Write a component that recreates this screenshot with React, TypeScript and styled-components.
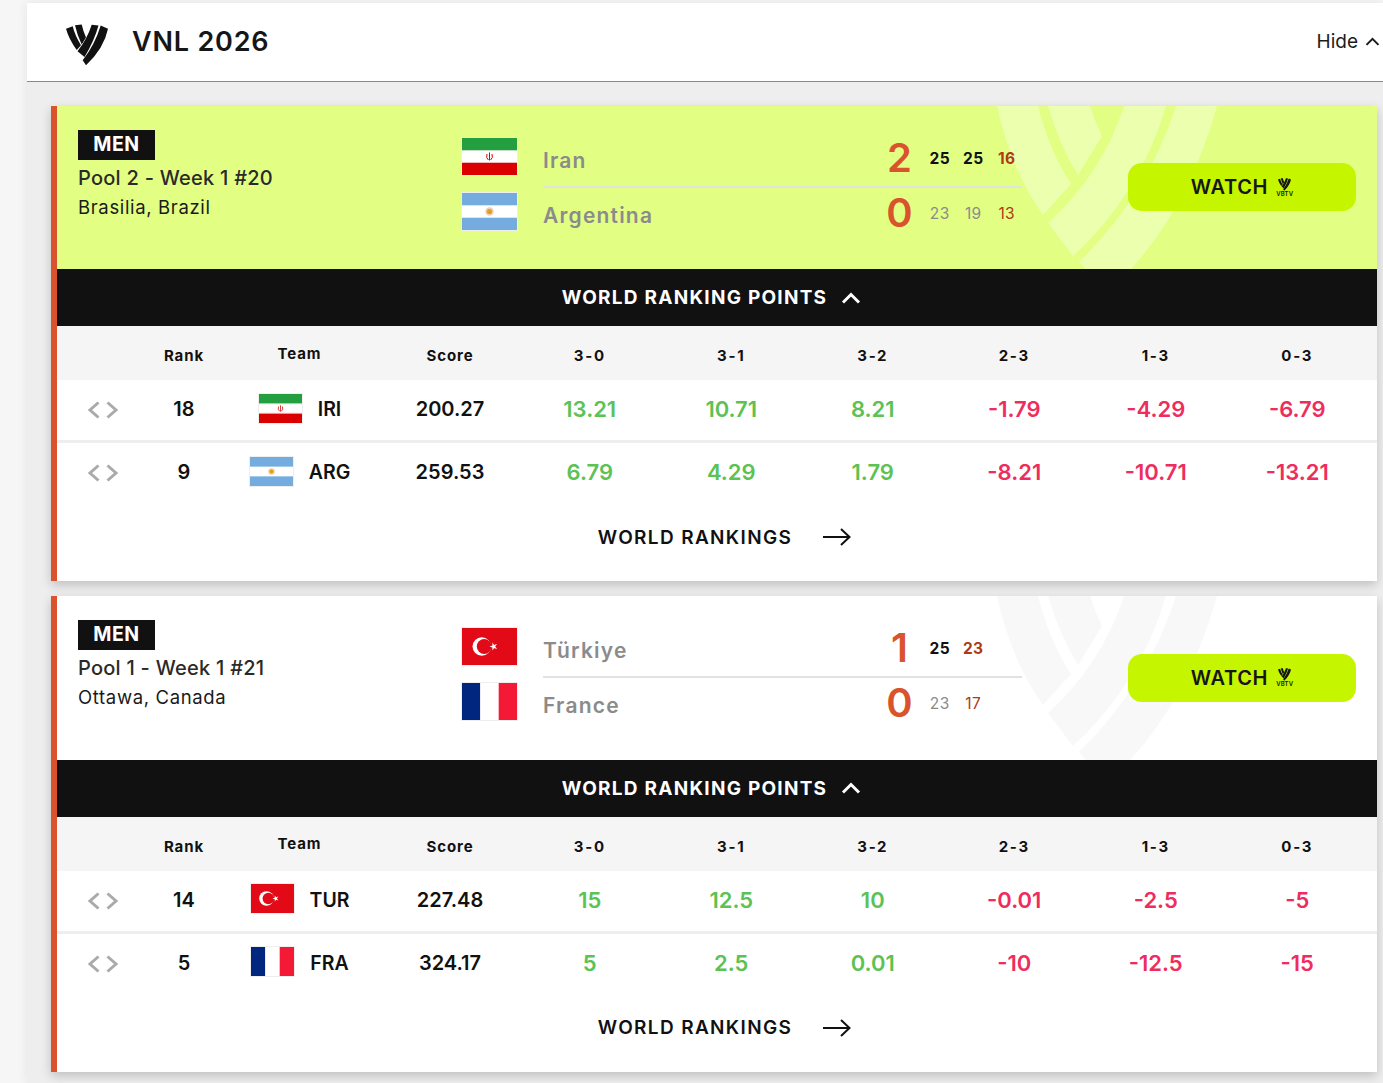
import styled, { createGlobalStyle } from 'styled-components';

const GlobalStyle = createGlobalStyle`
  html, body {
    margin: 0;
    padding: 0;
    background: #f6f6f6;
    overflow: hidden;
  }
  body {
    font-family: 'Inter', 'Liberation Sans', sans-serif;
    color: #111;
  }
`;

const Page = styled.div`
  padding: 3px 0 0 27px;
`;

const Panel = styled.div`
  background: #eeeeee;
  box-shadow: 0 0 10px rgba(0, 0, 0, 0.08);
  height: 1080px;
`;

const TopBar = styled.header`
  display: flex;
  align-items: center;
  justify-content: space-between;
  box-sizing: border-box;
  height: 79px;
  padding: 0 3px 2px 39px;
  background: #fff;
  border-bottom: 1px solid #888;
`;

const Brand = styled.div`
  display: flex;
  align-items: center;
  gap: 24px;
`;

const LogoSlot = styled.div`
  display: flex;
  padding-top: 8px;
`;

const BrandName = styled.h1`
  margin: 0;
  font-size: 27px;
  font-weight: 600;
  letter-spacing: 0.8px;
  color: #161616;
`;

const HideButton = styled.div`
  display: flex;
  align-items: center;
  gap: 7px;
  font-size: 19px;
  color: #1c1c1c;
`;

const CardList = styled.div`
  display: flex;
  flex-direction: column;
  gap: 15px;
  padding: 24px 6px 0 24px;
`;

const Card = styled.section`
  background: #fff;
  border-left: 6px solid #d9532c;
  box-shadow: 0 4px 10px rgba(0, 0, 0, 0.2);
`;

const MatchTop = styled.div<{ $live?: boolean }>`
  position: relative;
  overflow: hidden;
  display: grid;
  grid-template-columns: 383px 561px 1fr;
  height: 163.4px;
  padding-left: 21px;
  background: ${({ $live }) => ($live ? '#e2ff84' : '#fff')};
`;

const Watermark = styled.svg`
  position: absolute;
  top: 0;
  left: 940px;
  width: 230px;
  height: 164px;
`;

const Info = styled.div`
  position: relative;
  padding-top: 24px;
`;

const Badge = styled.div`
  display: flex;
  align-items: center;
  justify-content: center;
  box-sizing: border-box;
  width: 77px;
  height: 30px;
  padding-bottom: 2px;
  background: #111;
  color: #fff;
  font-size: 19.5px;
  font-weight: 700;
  letter-spacing: 0.6px;
`;

const PoolLine = styled.div`
  margin-top: 6px;
  font-size: 20px;
  line-height: 24px;
  font-weight: 500;
  letter-spacing: 0.25px;
  color: #2a2a2a;
`;

const PlaceLine = styled.div`
  margin-top: 5px;
  font-size: 18.5px;
  line-height: 24px;
  letter-spacing: 0.65px;
  color: #1a1a1a;
`;

const Match = styled.div`
  position: relative;
  display: flex;
  gap: 25px;
`;

const FlagStack = styled.div`
  display: flex;
  flex-direction: column;
  gap: 16px;
  padding-top: 31px;
`;

const FlagFrame = styled.div<{ $w: number; $h: number }>`
  width: ${({ $w }) => $w}px;
  height: ${({ $h }) => $h}px;
  flex: none;
  border: 1px solid #eeeeee;
  box-sizing: border-box;
  line-height: 0;
  svg {
    width: 100%;
    height: 100%;
    display: block;
  }
`;

const Lines = styled.div`
  flex: 1;
  min-width: 0;
  padding-top: 27px;
`;

const Line = styled.div<{ $divider?: boolean }>`
  display: flex;
  align-items: center;
  height: 53px;
  border-bottom: 2px solid ${({ $divider }) => ($divider ? '#e2e2e2' : 'transparent')};
`;

const TeamName = styled.div`
  width: 335px;
  flex: none;
  margin-top: 2px;
  font-size: 21px;
  font-weight: 600;
  letter-spacing: 1.2px;
  color: #8b8b8b;
`;

const BigScore = styled.div`
  width: 43px;
  flex: none;
  margin-top: -4px;
  font-size: 40px;
  font-weight: 600;
  line-height: 1;
  text-align: center;
  color: #d9532c;
`;

const SetScores = styled.div`
  display: flex;
  flex: none;
  margin-left: 2px;
  margin-top: -2px;
`;

const SetScore = styled.span<{ $bold?: boolean; $last?: boolean }>`
  width: 33.5px;
  text-align: center;
  font-size: 15.5px;
  letter-spacing: 0.4px;
  font-weight: ${({ $bold }) => ($bold ? 700 : 400)};
  color: ${({ $bold, $last }) => ($last ? '#ae3a17' : $bold ? '#111' : '#8b8b8b')};
`;

const WatchCell = styled.div`
  position: relative;
  display: flex;
  align-items: center;
  padding: 0 0 1px 106px;
`;

const WatchButton = styled.div`
  display: flex;
  align-items: center;
  justify-content: center;
  gap: 8px;
  width: 228px;
  height: 48px;
  border-radius: 14px;
  background: #c6f500;
  font-size: 20px;
  font-weight: 600;
  letter-spacing: 0.7px;
  color: #161616;
`;

const TvMark = styled.span`
  display: flex;
  flex-direction: column;
  align-items: center;
  font-size: 6px;
  line-height: 6px;
  font-weight: 600;
  letter-spacing: 0.2px;
`;

const PointsBar = styled.div`
  display: flex;
  align-items: center;
  justify-content: center;
  gap: 14px;
  height: 57px;
  padding-right: 11px;
  background: #111;
  color: #fff;
  font-size: 19px;
  font-weight: 700;
  letter-spacing: 1.25px;
`;

const gridColumns = '93px 68px 163px 138px repeat(6, 141.5px)';

const HeadRow = styled.div`
  display: grid;
  grid-template-columns: ${gridColumns};
  align-items: center;
  box-sizing: border-box;
  height: 54px;
  padding-top: 5px;
  background: #f5f5f5;
`;

const HeadCell = styled.div<{ $raised?: boolean; $wide?: boolean }>`
  text-align: center;
  font-size: 15px;
  font-weight: 700;
  letter-spacing: ${({ $wide }) => ($wide ? 1.7 : 0.9)}px;
  color: #111;
  padding-bottom: ${({ $raised }) => ($raised ? 5 : 0)}px;
`;

const Row = styled.div<{ $ruled?: boolean }>`
  display: grid;
  grid-template-columns: ${gridColumns};
  align-items: center;
  height: 58px;
  padding-bottom: 2px;
  border-bottom: ${({ $ruled }) => ($ruled ? '3px solid #eeeeee' : 'none')};
`;

const Nudge = styled.div`
  display: flex;
  justify-content: center;
  padding: 2px 2px 0 0;
`;

const RankCell = styled.div`
  text-align: center;
  font-size: 20px;
  font-weight: 600;
  color: #111;
`;

const TeamCell = styled.div`
  display: flex;
  align-items: center;
  justify-content: center;
  gap: 15px;
  font-size: 19.5px;
  font-weight: 600;
  color: #111;
  ${FlagFrame} {
    margin-bottom: 2px;
  }
`;

const ValueCell = styled.div<{ $tone: 'plain' | 'up' | 'down' }>`
  text-align: center;
  font-size: ${({ $tone }) => ($tone === 'plain' ? 20 : 22)}px;
  font-weight: 600;
  color: ${({ $tone }) => ($tone === 'up' ? '#5cc254' : $tone === 'down' ? '#ee2d5e' : '#111')};
`;

const RankingsLink = styled.div`
  display: flex;
  align-items: center;
  justify-content: center;
  gap: 31px;
  height: 68px;
  padding: 0 0 10px 15px;
  font-size: 19px;
  font-weight: 600;
  letter-spacing: 1.35px;
  color: #111;
`;

function LogoMark({ size }: { size: number }) {
  return (
    <svg width={size} height={size} viewBox="0 0 42 41" fill="currentColor">
      <path d="M0 4.3 L6.7 1.7 Q9 11 15 20.7 L10.7 25.5 Q3 15 0 4.3Z" />
      <path d="M9 .7 L15.7 0 Q17 6 20 13 L15.7 20 Q11 10 9 .7Z" />
      <path d="M25.7 .3 L32.5 1 Q28 17 18.5 32.5 L11.5 26.7 Q21 15 25.7 .3Z" />
      <path d="M34.7 1 L42 4.3 Q38 24 20 40.7 L16.7 35.7 Q29 20 34.7 1Z" />
    </svg>
  );
}

function Chevron({ width, stroke }: { width: number; stroke: number }) {
  return (
    <svg width={width} height={width * 0.6} viewBox="0 0 20 12" fill="none" stroke="currentColor" strokeWidth={stroke}>
      <path d="M2 10.5 L10 2.5 L18 10.5" />
    </svg>
  );
}

function NudgeArrows() {
  return (
    <svg width="32" height="18" viewBox="0 0 32 18" fill="none" stroke="#aaaaaa" strokeWidth="3">
      <path d="M11.5 1.5 L3 9 L11.5 16.5" />
      <path d="M20.5 1.5 L29 9 L20.5 16.5" />
    </svg>
  );
}

function LongArrow() {
  return (
    <svg width="28" height="20" viewBox="0 0 28 20" fill="none" stroke="#111" strokeWidth="2">
      <path d="M0 10 H26" />
      <path d="M18 2 L26.5 10 L18 18" />
    </svg>
  );
}

function IranFlag() {
  return (
    <svg viewBox="0 0 55 37" preserveAspectRatio="none">
      <rect width="55" height="37" fill="#fff" />
      <rect width="55" height="12.3" fill="#239f40" />
      <rect y="24.7" width="55" height="12.3" fill="#da0000" />
      <rect y="12" width="55" height="1" fill="#bfe0c4" />
      <rect y="24" width="55" height="1" fill="#f2b8b8" />
      <path d="M27.5 14.5 V22.5 M25 16 Q23.6 19.8 26.4 22 M30 16 Q31.4 19.8 28.6 22" stroke="#da0000" strokeWidth="1" fill="none" />
    </svg>
  );
}

function ArgentinaFlag() {
  return (
    <svg viewBox="0 0 55 37" preserveAspectRatio="none">
      <rect width="55" height="37" fill="#74acdf" />
      <rect y="12.3" width="55" height="12.4" fill="#fff" />
      <circle cx="27.5" cy="18.5" r="4.2" fill="#f0d0b0" />
      <circle cx="27.5" cy="18.5" r="2.6" fill="#e0a020" />
    </svg>
  );
}

function TurkeyFlag() {
  return (
    <svg viewBox="0 0 55 37" preserveAspectRatio="none">
      <rect width="55" height="37" fill="#e30a17" />
      <circle cx="19.8" cy="18.5" r="9.3" fill="#fff" />
      <circle cx="22.2" cy="18.5" r="7.4" fill="#e30a17" />
      <path d="M27.5 18.5 L35 16 L30.4 22.4 L30.4 14.6 L35 21Z" fill="#fff" />
    </svg>
  );
}

function FranceFlag() {
  return (
    <svg viewBox="0 0 55 37" preserveAspectRatio="none">
      <rect width="18.3" height="37" fill="#002680" />
      <rect x="18.3" width="18.4" height="37" fill="#fff" />
      <rect x="36.7" width="18.3" height="37" fill="#f41a35" />
    </svg>
  );
}

const flags: Record<string, () => React.JSX.Element> = {
  IRI: IranFlag,
  ARG: ArgentinaFlag,
  TUR: TurkeyFlag,
  FRA: FranceFlag,
};

type Side = { name: string; code: string; sets: number; scores: number[]; winner?: boolean };
type Ranked = { code: string; rank: number; score: string; values: string[] };
type MatchData = {
  live?: boolean;
  pool: string;
  place: string;
  sides: [Side, Side];
  ranked: [Ranked, Ranked];
};

const matches: MatchData[] = [
  {
    live: true,
    pool: 'Pool 2 - Week 1 #20',
    place: 'Brasilia, Brazil',
    sides: [
      { name: 'Iran', code: 'IRI', sets: 2, scores: [25, 25, 16], winner: true },
      { name: 'Argentina', code: 'ARG', sets: 0, scores: [23, 19, 13] },
    ],
    ranked: [
      { code: 'IRI', rank: 18, score: '200.27', values: ['13.21', '10.71', '8.21', '-1.79', '-4.29', '-6.79'] },
      { code: 'ARG', rank: 9, score: '259.53', values: ['6.79', '4.29', '1.79', '-8.21', '-10.71', '-13.21'] },
    ],
  },
  {
    pool: 'Pool 1 - Week 1 #21',
    place: 'Ottawa, Canada',
    sides: [
      { name: 'Türkiye', code: 'TUR', sets: 1, scores: [25, 23], winner: true },
      { name: 'France', code: 'FRA', sets: 0, scores: [23, 17] },
    ],
    ranked: [
      { code: 'TUR', rank: 14, score: '227.48', values: ['15', '12.5', '10', '-0.01', '-2.5', '-5'] },
      { code: 'FRA', rank: 5, score: '324.17', values: ['5', '2.5', '0.01', '-10', '-12.5', '-15'] },
    ],
  },
];

const outcomes = ['3-0', '3-1', '3-2', '2-3', '1-3', '0-3'];

function MatchCard({ data }: { data: MatchData }) {
  const shapeFill = data.live ? 'rgba(255,255,255,0.35)' : '#f8f8f8';
  return (
    <Card>
      <MatchTop $live={data.live}>
        <Watermark viewBox="0 0 230 164" fill={shapeFill}>
          <path d="M0 0 H41 Q52 44 74 78 L46 109 Q14 64 0 0Z" />
          <path d="M51 0 H93 Q98 16 105 30 L81 69 Q62 38 51 0Z" />
          <path d="M127 0 H169 Q142 90 76 150 L51 117 Q105 68 127 0Z" />
          <path d="M179 0 H220 Q192 100 133 164 H89 L82 156 Q150 90 179 0Z" />
        </Watermark>
        <Info>
          <Badge>MEN</Badge>
          <PoolLine>{data.pool}</PoolLine>
          <PlaceLine>{data.place}</PlaceLine>
        </Info>
        <Match>
          <FlagStack>
            {data.sides.map((side) => {
              const Flag = flags[side.code];
              return (
                <FlagFrame key={side.code} $w={57} $h={39}>
                  <Flag />
                </FlagFrame>
              );
            })}
          </FlagStack>
          <Lines>
            {data.sides.map((side, i) => (
              <Line key={side.code} $divider={i === 0}>
                <TeamName>{side.name}</TeamName>
                <BigScore>{side.sets}</BigScore>
                <SetScores>
                  {side.scores.map((score, j) => (
                    <SetScore key={j} $bold={side.winner} $last={j === side.scores.length - 1}>
                      {score}
                    </SetScore>
                  ))}
                </SetScores>
              </Line>
            ))}
          </Lines>
        </Match>
        <WatchCell>
          <WatchButton>
            WATCH
            <TvMark>
              <LogoMark size={13} />
              VBTV
            </TvMark>
          </WatchButton>
        </WatchCell>
      </MatchTop>
      <PointsBar>
        WORLD RANKING POINTS
        <Chevron width={20} stroke={3} />
      </PointsBar>
      <HeadRow>
        <span />
        <HeadCell>Rank</HeadCell>
        <HeadCell $raised>Team</HeadCell>
        <HeadCell>Score</HeadCell>
        {outcomes.map((o) => (
          <HeadCell key={o} $wide>
            {o}
          </HeadCell>
        ))}
      </HeadRow>
      {data.ranked.map((team, i) => {
        const Flag = flags[team.code];
        return (
          <Row key={team.code} $ruled={i === 0}>
            <Nudge>
              <NudgeArrows />
            </Nudge>
            <RankCell>{team.rank}</RankCell>
            <TeamCell>
              <FlagFrame $w={45} $h={31}>
                <Flag />
              </FlagFrame>
              {team.code}
            </TeamCell>
            <ValueCell $tone="plain">{team.score}</ValueCell>
            {team.values.map((value, j) => (
              <ValueCell key={j} $tone={j < 3 ? 'up' : 'down'}>
                {value}
              </ValueCell>
            ))}
          </Row>
        );
      })}
      <RankingsLink>
        WORLD RANKINGS
        <LongArrow />
      </RankingsLink>
    </Card>
  );
}

export default function App() {
  return (
    <>
      <GlobalStyle />
      <Page>
        <Panel>
          <TopBar>
            <Brand>
              <LogoSlot>
                <LogoMark size={42} />
              </LogoSlot>
              <BrandName>VNL 2026</BrandName>
            </Brand>
            <HideButton>
              Hide
              <Chevron width={15} stroke={2.8} />
            </HideButton>
          </TopBar>
          <CardList>
            {matches.map((m) => (
              <MatchCard key={m.pool} data={m} />
            ))}
          </CardList>
        </Panel>
      </Page>
    </>
  );
}
